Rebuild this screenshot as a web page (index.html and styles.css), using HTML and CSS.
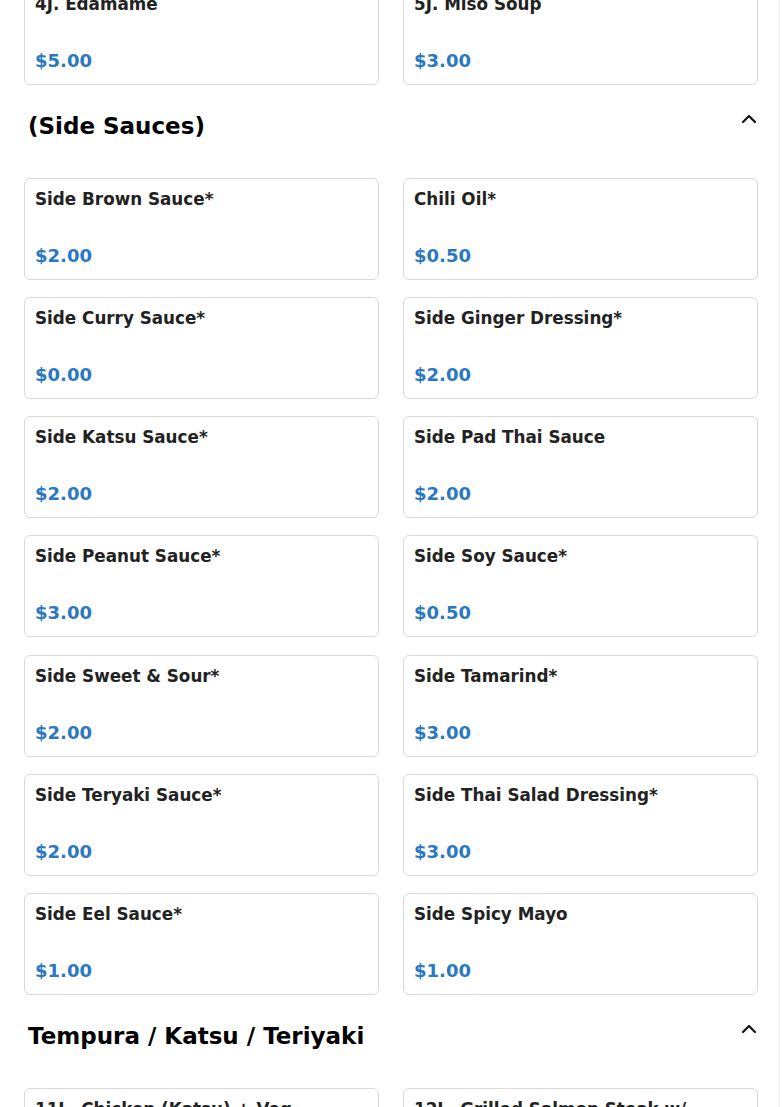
FILE: index.html
```html
<!DOCTYPE html>
<html lang="en">
<head>
<meta charset="utf-8">
<title>Menu</title>
<link rel="stylesheet" href="styles.css">
</head>
<body>
<div class="page">
  <div class="menu">
    <section class="section first">
      <div class="grid">
        <div class="card"><div class="name">4J. Edamame</div><div class="price">$5.00</div></div>
        <div class="card"><div class="name">5J. Miso Soup</div><div class="price">$3.00</div></div>
      </div>
    </section>

    <section class="section">
      <div class="head">
        <h2>(Side Sauces)</h2>
        <svg class="chev" width="24" height="24" viewBox="0 0 24 24" fill="none" stroke="#111" stroke-width="2.2" stroke-linecap="round" stroke-linejoin="round"><path d="M6 15l6-6 6 6"/></svg>
      </div>
      <div class="grid">
        <div class="card"><div class="name">Side Brown Sauce*</div><div class="price">$2.00</div></div>
        <div class="card"><div class="name">Chili Oil*</div><div class="price">$0.50</div></div>
        <div class="card"><div class="name">Side Curry Sauce*</div><div class="price">$0.00</div></div>
        <div class="card"><div class="name">Side Ginger Dressing*</div><div class="price">$2.00</div></div>
        <div class="card"><div class="name">Side Katsu Sauce*</div><div class="price">$2.00</div></div>
        <div class="card"><div class="name">Side Pad Thai Sauce</div><div class="price">$2.00</div></div>
        <div class="card"><div class="name">Side Peanut Sauce*</div><div class="price">$3.00</div></div>
        <div class="card"><div class="name">Side Soy Sauce*</div><div class="price">$0.50</div></div>
        <div class="card"><div class="name">Side Sweet &amp; Sour*</div><div class="price">$2.00</div></div>
        <div class="card"><div class="name">Side Tamarind*</div><div class="price">$3.00</div></div>
        <div class="card"><div class="name">Side Teryaki Sauce*</div><div class="price">$2.00</div></div>
        <div class="card"><div class="name">Side Thai Salad Dressing*</div><div class="price">$3.00</div></div>
        <div class="card"><div class="name">Side Eel Sauce*</div><div class="price">$1.00</div></div>
        <div class="card"><div class="name">Side Spicy Mayo</div><div class="price">$1.00</div></div>
      </div>
    </section>

    <section class="section">
      <div class="head">
        <h2>Tempura / Katsu / Teriyaki</h2>
        <svg class="chev" width="24" height="24" viewBox="0 0 24 24" fill="none" stroke="#111" stroke-width="2.2" stroke-linecap="round" stroke-linejoin="round"><path d="M6 15l6-6 6 6"/></svg>
      </div>
      <div class="grid">
        <div class="card"><div class="name">11L. Chicken (Katsu) + Veg</div><div class="price">$14.00</div></div>
        <div class="card"><div class="name">12L. Grilled Salmon Steak w/ Teriyaki Sauce</div><div class="price">$16.00</div></div>
      </div>
    </section>
  </div>
</div>
</body>
</html>
```

FILE: styles.css
```css
html, body {
  margin: 0;
  padding: 0;
  background: #fff;
  overflow: hidden;
}
body {
  font-family: "DejaVu Sans", "Liberation Sans", sans-serif;
  color: #222;
}
.page {
  width: 779px;
  height: 1107px;
  border-right: 1px solid #efefef;
  overflow: hidden;
}
.menu {
  margin-top: -17px;
  padding: 0 24px;
}
.section {
  margin-top: 27px;
}
.section.first {
  margin-top: 0;
}
.head {
  display: flex;
  justify-content: space-between;
  align-items: flex-start;
  height: 26px;
  margin-bottom: 40px;
  padding-left: 4px;
}
.head h2 {
  margin: 0;
  font-size: 23px;
  font-weight: bold;
  line-height: 28px;
  color: #000;
}
.chev {
  margin-top: -5px;
  margin-right: -6px;
}
.grid {
  display: grid;
  grid-template-columns: 355px 355px;
  column-gap: 24px;
  row-gap: 17.17px;
}
.card {
  box-sizing: border-box;
  height: 102px;
  border: 1px solid #d9d9d9;
  border-radius: 6px;
  padding: 10px 10px 13px 10px;
  display: flex;
  flex-direction: column;
  justify-content: space-between;
  background: #fff;
}
.name {
  font-size: 16.8px;
  font-weight: bold;
  line-height: 20px;
  color: #222;
}
.price {
  font-size: 18px;
  font-weight: bold;
  line-height: 21px;
  color: #2a78c2;
}
```
